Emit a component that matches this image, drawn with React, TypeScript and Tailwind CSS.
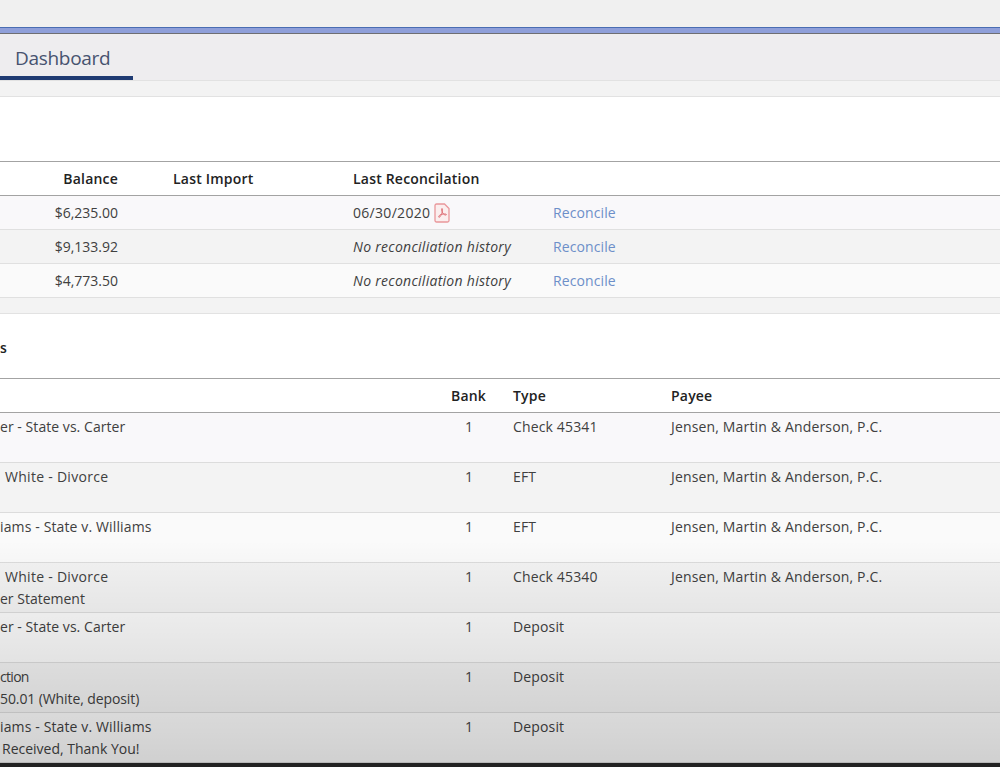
const font = { fontFamily: '"Open Sans", "Noto Sans", sans-serif' };

function PdfIcon() {
  return (
    <svg width="16" height="20" viewBox="0 0 16 20" className="ml-[4px] shrink-0" fill="none">
      <path d="M1 2.500a1.500 1.500 0 0 1 1.500-1.500h8l4.500 4.500v12a1.500 1.500 0 0 1-1.500 1.500h-11a1.500 1.500 0 0 1-1.500-1.500z" fill="#fbeeee" stroke="#e9979b" strokeWidth="1.300" />
      <path d="M8 5.500c-.7 0-.5 1.800.3 3.600.8 1.700 1.900 2.800 3.300 3 .9.100 1.100-.8.300-1-1.400-.3-4.200-.1-5.800.8-1.300.8-1.900 2.300-1 2.400 1 .1 2.600-3 3.200-5.600.3-1.500.4-3.200-.3-3.200z" stroke="#df6f76" strokeWidth="1" />
    </svg>
  );
}

const accounts = [
  { bal: "$6,235.00", date: "06/30/2020", bg: "bg-[#f9f8fa]" },
  { bal: "$9,133.92", bg: "bg-[#f3f3f3]" },
  { bal: "$4,773.50", bg: "bg-[#fafafa]" },
];

const tx = [
  { a: "er - State vs. Carter", ax: "tracking-[0.05px]", t: "Check 45341", p: true, bg: "bg-[#f9f8fa]" },
  { a: "White - Divorce", ax: "pl-[5px] tracking-[0.28px]", t: "EFT", p: true, bg: "bg-[#f3f3f3]" },
  { a: "iams - State v. Williams", ax: "tracking-[0.13px]", t: "EFT", p: true, bg: "bg-[#fafafa]" },
  { a: "White - Divorce", ax: "pl-[5px] tracking-[0.28px]", b: "er Statement", t: "Check 45340", p: true, bg: "bg-[#f3f3f3]" },
  { a: "er - State vs. Carter", ax: "tracking-[0.05px]", t: "Deposit", bg: "bg-[#fafafa]" },
  { a: "ction", ax: "tracking-[-0.7px]", b: "50.01 (White, deposit)", bx: "tracking-[-0.1px]", t: "Deposit", bg: "bg-[#f3f3f3]" },
  { a: "iams - State v. Williams", ax: "tracking-[0.13px]", b: "Received, Thank You!", bx: "pl-[2px]", t: "Deposit", bg: "bg-[#fafafa]" },
];

export default function App() {
  return (
    <div style={font} className="relative flex h-[767px] w-[1000px] flex-col overflow-hidden bg-white text-[14px] text-[#404040]">
      <div className="h-[27px] bg-[#f0f0f0]" />
      <div className="h-[7px] border-t border-b border-t-[#4a6db3] border-b-[#6e6e72] bg-[#8f9fd9]" />
      <div className="flex h-[47px] items-stretch border-b border-[#e2e2e2] bg-[#eeedef]">
        <div className="flex w-[133px] items-center border-b-[4px] border-[#1f3b73] pl-[15px] pt-[6px] text-[19px] tracking-[-0.3px] text-[#47536f]">Dashboard</div>
      </div>
      <div className="h-[16px] border-b border-[#e2e2e2] bg-[#f3f3f3]" />
      <div className="h-[64px]" />

      <div className="grid h-[35px] grid-cols-[173px_180px_200px_1fr] items-center border-y border-[#a3a3a3] font-semibold tracking-[0.2px] text-[#222]">
        <div className="pr-[55px] text-right">Balance</div>
        <div>Last Import</div>
        <div>Last Reconcilation</div>
        <div />
      </div>
      {accounts.map((r) => (
        <div key={r.bal} className={`grid h-[34px] grid-cols-[173px_180px_200px_1fr] items-center border-b border-[#e0e0e0] ${r.bg}`}>
          <div className="pr-[55px] text-right">{r.bal}</div>
          <div />
          {r.date ? (
            <div className="flex items-center tracking-[0.3px]">{r.date}<PdfIcon /></div>
          ) : (
            <div className="italic tracking-[0.28px]">No reconciliation history</div>
          )}
          <div className="tracking-[0.1px] text-[#6d8fc9]">Reconcile</div>
        </div>
      ))}
      <div className="h-[16px] border-b border-[#e2e2e2] bg-[#f3f3f3]" />
      <div className="flex h-[64px] items-center pt-[2px] font-semibold text-[#222]">s</div>

      <div className="grid h-[35px] grid-cols-[451px_62px_158px_1fr] items-center border-y border-[#a3a3a3] font-semibold tracking-[0.2px] text-[#222]">
        <div />
        <div>Bank</div>
        <div>Type</div>
        <div>Payee</div>
      </div>
      {tx.map((r, i) => (
        <div key={i} className={`grid h-[50px] grid-cols-[451px_62px_158px_1fr] border-b border-[#dcdcdc] pt-[3px] leading-[22px] ${r.bg}`}>
          <div className="whitespace-nowrap">
            <div className={r.ax}>{r.a}</div>
            {r.b && <div className={r.bx}>{r.b}</div>}
          </div>
          <div className="pl-[14px]">1</div>
          <div className="tracking-[0.15px]">{r.t}</div>
          <div className="tracking-[0.16px]">{r.p ? "Jensen, Martin & Anderson, P.C." : ""}</div>
        </div>
      ))}

      <div className="pointer-events-none absolute inset-x-0 top-[540px] h-[223px] bg-gradient-to-b from-transparent to-[rgba(0,0,0,0.17)]" />
      <div className="absolute inset-x-0 bottom-0 h-[4px] bg-[#222222]" />
    </div>
  );
}
